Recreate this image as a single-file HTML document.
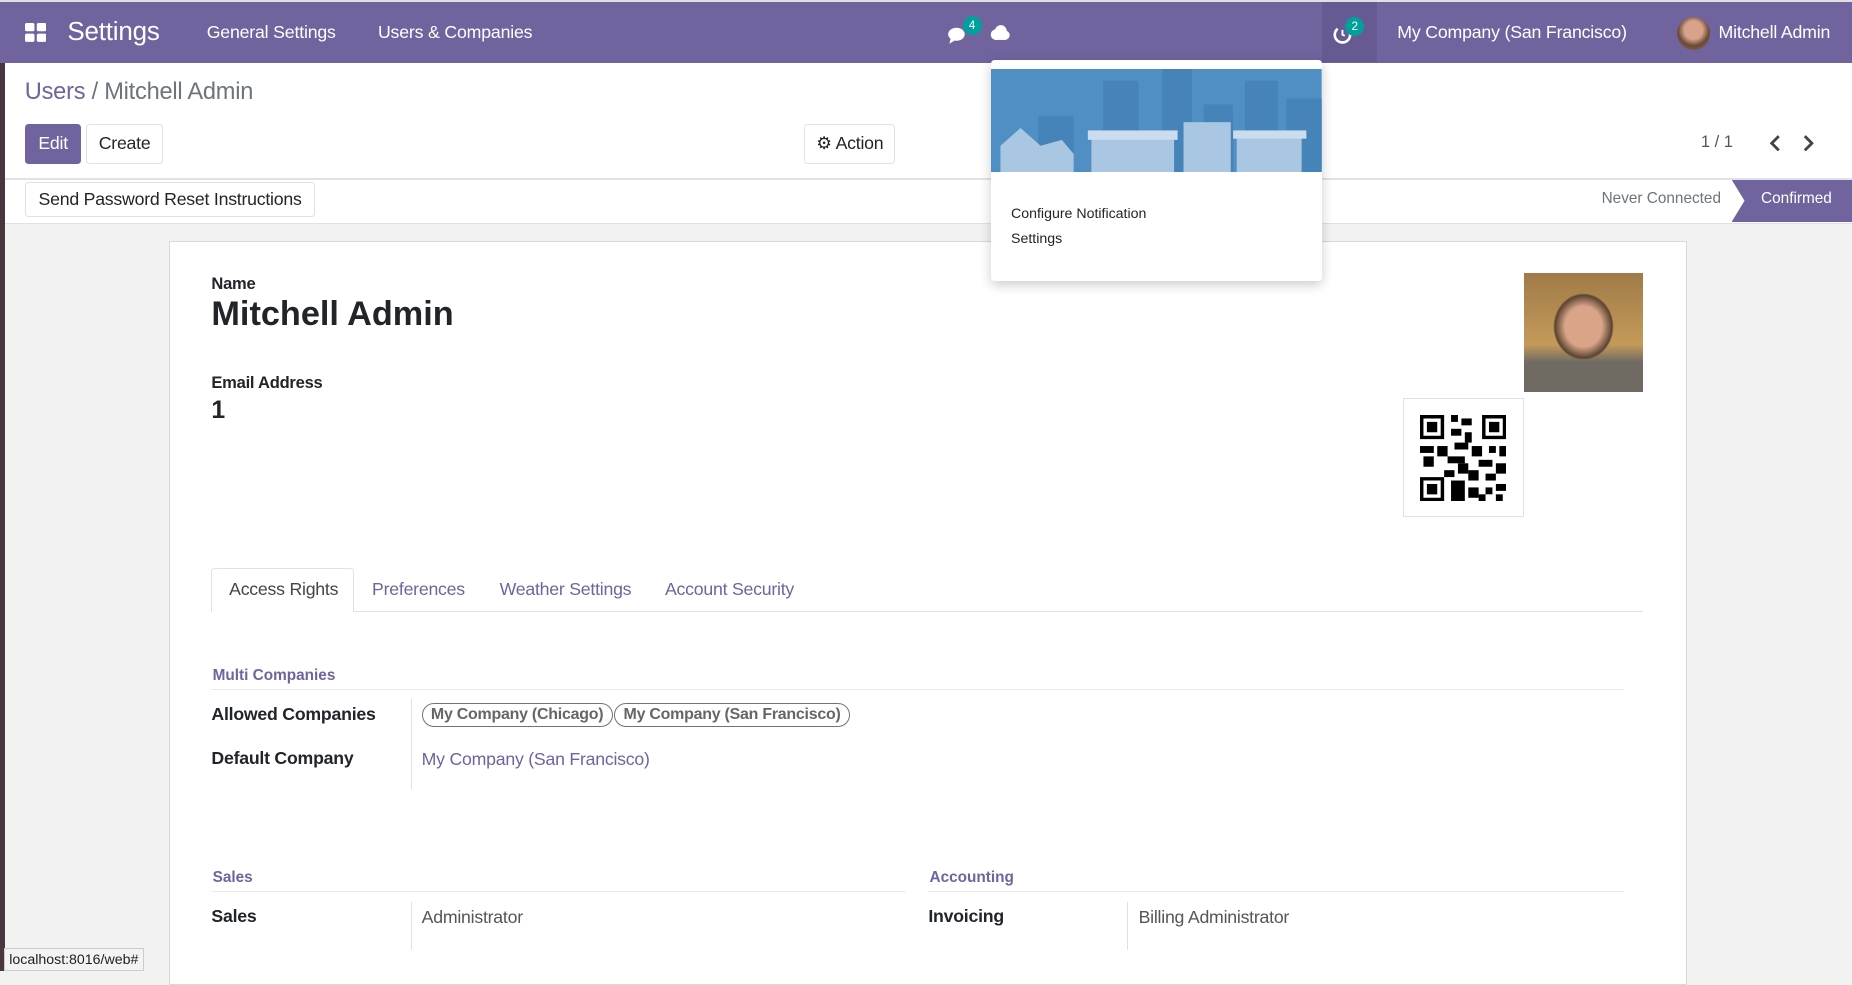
<!DOCTYPE html>
<html><head><meta charset="utf-8"><style>
html{zoom:1.18112}
body{margin:0;width:1568px;height:822px;overflow:hidden;font-family:"Liberation Sans",sans-serif;background:#f2f2f2;position:relative;color:#212529}
.a{position:absolute}
.nav{left:0;top:0;width:1568px;height:53px;background:#71639e;border-top:2px solid #e0e0e0;box-sizing:border-box;color:#fff}
.nav span{position:absolute;top:17px;font-size:15px;letter-spacing:-0.15px}
.btn{position:absolute;border:1px solid #dee2e6;border-radius:3px;background:#fff;font-size:15px;box-sizing:border-box;text-align:center;letter-spacing:-0.2px}
.lbl{font-weight:bold;font-size:15px;letter-spacing:-0.2px}
.badge{position:absolute;width:16px;height:16px;border-radius:8px;background:#00a09d;color:#fff;font-size:10px;text-align:center;line-height:16px}
.sec{color:#71639e;font-weight:bold;font-size:13px}
.hr{height:1px;background:#e9ecef}
.tag{display:inline-block;border:1px solid #6c757d;border-radius:12px;padding:2px 7px;font-weight:bold;color:#666;font-size:13.5px;letter-spacing:-0.2px}
.t{letter-spacing:-0.2px}
</style></head><body>
<div class="a" style="left:0;top:0;width:4px;height:822px;background:#4a3640"></div>
<div class="a nav">
 <svg class="a" style="left:21px;top:18px" width="18" height="17"><rect x="0" y="0" width="8" height="7" rx="1.5" fill="#fff"/><rect x="10" y="0" width="8" height="7" rx="1.5" fill="#fff"/><rect x="0" y="9" width="8" height="7" rx="1.5" fill="#fff"/><rect x="10" y="9" width="8" height="7" rx="1.5" fill="#fff"/></svg>
 <span style="left:57px;top:12px;font-size:22px">Settings</span>
 <span style="left:175px">General Settings</span>
 <span style="left:320px">Users &amp; Companies</span>
 <svg class="a" style="left:802px;top:20px" width="18" height="16"><ellipse cx="8" cy="7" rx="7" ry="5.5" fill="#fff"/><path d="M3 11 L2 15 L7 12Z" fill="#fff"/></svg>
 <div class="badge" style="left:815px;top:12px">4</div>
 <svg class="a" style="left:837px;top:19px" width="18" height="14"><circle cx="6" cy="9" r="4.5" fill="#fff"/><circle cx="10" cy="6" r="5" fill="#fff"/><circle cx="13.5" cy="9.5" r="4" fill="#fff"/><rect x="5" y="9" width="9" height="4.5" fill="#fff"/></svg>
 <div class="a" style="left:1119px;top:0;width:47px;height:51px;background:#675a92"></div>
 <svg class="a" style="left:1129px;top:19px" width="16" height="17"><path d="M12 4 A6.5 6.5 0 1 1 4 4" stroke="#fff" stroke-width="2.2" fill="none"/><path d="M8 5 V9 L10 10" stroke="#fff" stroke-width="1.6" fill="none"/></svg>
 <div class="badge" style="left:1139px;top:13px">2</div>
 <span style="left:1183px">My Company (San Francisco)</span>
 <div class="a" style="left:1420px;top:13px;width:28px;height:28px;border-radius:14px;background:radial-gradient(circle at 50% 40%,#d8a38a 0 35%,#6b4a36 60%,#8a7060)"></div>
 <span style="left:1455px">Mitchell Admin</span>
</div>
<div class="a" style="left:4px;top:53px;width:1564px;height:136px;background:#fff;border-bottom:1px solid #dee2e6"></div>
<div class="a" style="left:4px;top:151px;width:1564px;height:1px;background:#dee2e6"></div>
<div class="a t" style="left:21px;top:67px;font-size:20px;color:#71639e">Users <span style="color:#6c757d">/ Mitchell Admin</span></div>
<div class="btn" style="left:21px;top:105px;width:48px;height:34px;background:#71639e;border-color:#71639e;color:#fff;line-height:31px">Edit</div>
<div class="btn" style="left:73px;top:105px;width:65px;height:34px;line-height:31px">Create</div>
<div class="btn" style="left:681px;top:105px;width:77px;height:34px;line-height:31px">⚙ Action</div>
<div class="a" style="left:1440px;top:112px;font-size:14px;color:#555">1 / 1</div>
<svg class="a" style="left:1496px;top:114px" width="50" height="14"><path d="M10 1 L4 7 L10 13" stroke="#444" stroke-width="2.4" fill="none"/><path d="M32 1 L38 7 L32 13" stroke="#444" stroke-width="2.4" fill="none"/></svg>
<div class="btn" style="left:21px;top:154px;width:246px;height:30px;line-height:28px">Send Password Reset Instructions</div>
<div class="a" style="left:1356px;top:161px;font-size:13px;color:#6c757d">Never Connected</div>
<div class="a" style="left:1466px;top:152px;width:102px;height:36px;background:#71639e;clip-path:polygon(0 0,100% 0,100% 100%,0 100%,11px 50%)"></div>
<div class="a" style="left:1491px;top:161px;font-size:13px;color:#fff">Confirmed</div>
<div class="a" style="left:143px;top:204px;width:1285px;height:630px;background:#fff;border:1px solid #d8d8d8;box-sizing:border-box"></div>
<div class="a lbl" style="left:179px;top:232px;font-size:14px">Name</div>
<div class="a" style="left:179px;top:250px;font-size:29px;font-weight:bold">Mitchell Admin</div>
<div class="a lbl" style="left:179px;top:316px;font-size:14px">Email Address</div>
<div class="a" style="left:179px;top:336px;font-size:21px;font-weight:bold">1</div>
<div class="a" style="left:1290px;top:231px;width:101px;height:101px;background:radial-gradient(ellipse at 50% 45%,#d9a487 0 22%,#5a4330 34%,transparent 36%),linear-gradient(#a07a48,#c49a5a 60%,#6f6a62 75%)"></div>
<div class="a" style="left:1188px;top:337px;width:102px;height:101px;border:1px solid #dee2e6;box-sizing:border-box;background:#fff"></div>
<svg class="a" style="left:1202px;top:351px" width="73" height="73" viewBox="0 0 25 25"><g fill="#000"><path d="M0 0h7v7H0zM1 1v5h5V1zM2 2h3v3H2z" fill-rule="evenodd"/><path d="M18 0h7v7h-7zM19 1v5h5V1zM20 2h3v3h-3z" fill-rule="evenodd"/><path d="M0 18h7v7H0zM1 19v5h5v-5zM2 20h3v3H2z" fill-rule="evenodd"/><rect x="9" y="0" width="2" height="2"/><rect x="12" y="1" width="3" height="2"/><rect x="9" y="4" width="3" height="2"/><rect x="13" y="5" width="2" height="3"/><rect x="0" y="9" width="4" height="2"/><rect x="5" y="9" width="3" height="3"/><rect x="10" y="8" width="4" height="2"/><rect x="15" y="9" width="3" height="3"/><rect x="20" y="9" width="2" height="2"/><rect x="23" y="9" width="2" height="3"/><rect x="1" y="12" width="3" height="3"/><rect x="8" y="12" width="5" height="2"/><rect x="11" y="14" width="3" height="3"/><rect x="17" y="13" width="4" height="2"/><rect x="22" y="14" width="3" height="3"/><rect x="7" y="16" width="3" height="2"/><rect x="14" y="16" width="3" height="3"/><rect x="19" y="17" width="3" height="2"/><rect x="9" y="19" width="4" height="6"/><rect x="14" y="21" width="3" height="3"/><rect x="19" y="21" width="2" height="2"/><rect x="22" y="20" width="3" height="2"/><rect x="17" y="23" width="2" height="2"/><rect x="22" y="23" width="2" height="2"/></g></svg>
<div class="a" style="left:179px;top:517px;width:1212px;height:1px;background:#dee2e6"></div>
<div class="a" style="left:179px;top:481px;width:121px;height:37px;background:#fff;border:1px solid #dee2e6;border-bottom:none;border-radius:3px 3px 0 0;box-sizing:border-box"></div>
<div class="a t" style="left:194px;top:490px;font-size:15px;color:#444">Access Rights</div>
<div class="a t" style="left:315px;top:490px;font-size:15px;color:#71639e">Preferences</div>
<div class="a t" style="left:423px;top:490px;font-size:15px;color:#71639e">Weather Settings</div>
<div class="a t" style="left:563px;top:490px;font-size:15px;color:#71639e">Account Security</div>
<div class="a sec" style="left:180px;top:565px">Multi Companies</div>
<div class="a hr" style="left:179px;top:583px;width:1196px"></div>
<div class="a lbl" style="left:179px;top:596px">Allowed Companies</div>
<div class="a" style="left:348px;top:592px;width:1px;height:76px;background:#dee2e6"></div>
<div class="a" style="left:357px;top:595px"><span class="tag">My Company (Chicago)</span> <span class="tag" style="margin-left:-3px">My Company (San Francisco)</span></div>
<div class="a lbl" style="left:179px;top:633px">Default Company</div>
<div class="a t" style="left:357px;top:634px;font-size:15px;color:#71639e">My Company (San Francisco)</div>
<div class="a sec" style="left:180px;top:736px">Sales</div>
<div class="a hr" style="left:179px;top:754px;width:588px"></div>
<div class="a lbl" style="left:179px;top:767px">Sales</div>
<div class="a" style="left:348px;top:764px;width:1px;height:40px;background:#dee2e6"></div>
<div class="a t" style="left:357px;top:768px;font-size:15px;color:#555">Administrator</div>
<div class="a sec" style="left:787px;top:736px">Accounting</div>
<div class="a hr" style="left:786px;top:754px;width:589px"></div>
<div class="a lbl" style="left:786px;top:767px">Invoicing</div>
<div class="a" style="left:954px;top:764px;width:1px;height:40px;background:#dee2e6"></div>
<div class="a t" style="left:964px;top:768px;font-size:15px;color:#555">Billing Administrator</div>
<div class="a" style="left:839px;top:51px;width:280px;height:187px;background:#fff;border-radius:3px;box-shadow:0 3px 10px rgba(0,0,0,.2)"></div>
<svg class="a" style="left:839px;top:58px" width="280" height="88"><rect width="280" height="88" fill="#4f8fc4"/><g fill="#4683b8"><rect x="95" y="10" width="30" height="78"/><rect x="145" y="0" width="25" height="88"/><rect x="215" y="10" width="28" height="78"/><rect x="40" y="40" width="30" height="48"/><rect x="250" y="25" width="30" height="63"/><rect x="180" y="30" width="25" height="58"/></g><g fill="#a9c6e2"><path d="M8 88 L8 65 L25 50 L42 65 L60 60 L70 72 L70 88Z"/><rect x="85" y="58" width="70" height="30"/><rect x="163" y="45" width="40" height="43"/><rect x="208" y="58" width="55" height="30"/></g><g fill="#cbdcee"><rect x="82" y="52" width="76" height="8"/><rect x="205" y="52" width="62" height="7"/></g></svg>
<div class="a" style="left:856px;top:174px;font-size:12px">Configure Notification</div>
<div class="a" style="left:856px;top:196px;font-size:12px">Settings</div>
<div class="a" style="left:3px;top:803px;padding:2px 4px;background:#f3f3f3;border:1px solid #ccc;font-size:12px;color:#222">localhost:8016/web#</div>
</body></html>
